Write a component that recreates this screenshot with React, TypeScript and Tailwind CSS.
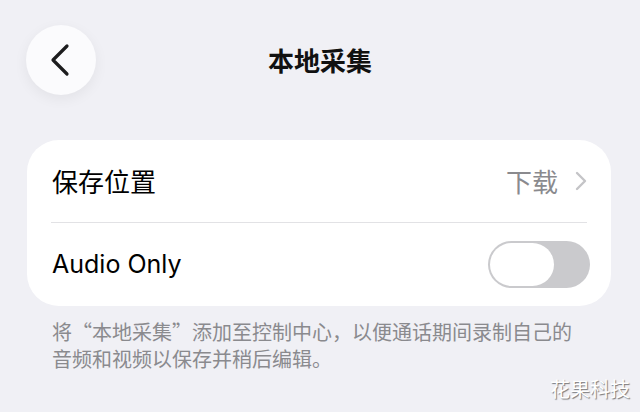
import React, { useState } from 'react';

const cjk = '[font-family:"Noto_Sans_CJK_SC","Noto_Sans",sans-serif]';

function BackButton() {
  return (
    <button className="w-[70px] h-[70px] rounded-full bg-[#fbfbfd] shadow-[0_4px_14px_rgba(0,0,0,0.06)] flex items-center justify-center">
      <svg width="24" height="34" viewBox="0 0 24 34" fill="none">
        <path d="M18 3 L4 17 L18 31" stroke="#1c1c1e" strokeWidth="3.2" strokeLinecap="round" strokeLinejoin="round" />
      </svg>
    </button>
  );
}

function Toggle({ on, onChange }: { on: boolean; onChange: () => void }) {
  return (
    <button
      onClick={onChange}
      className={`w-[102px] h-[47px] rounded-full p-[2px] flex ${on ? 'bg-[#34c759] justify-end' : 'bg-[#cacacd] justify-start'}`}
    >
      <span className="block w-[64px] h-full rounded-full bg-white" />
    </button>
  );
}

function App() {
  const [audioOnly, setAudioOnly] = useState(false);

  return (
    <div className={`relative w-[640px] h-[412px] overflow-hidden bg-[#f0f0f5] ${cjk}`}>
      <div className="flex items-center pt-[25px] pl-[26px] h-[95px]">
        <BackButton />
        <h1 className="flex-1 text-center text-[26px] font-bold text-[#111] pr-[96px] leading-none">本地采集</h1>
      </div>

      <div className="ml-[27px] w-[584px] mt-[45px] bg-white rounded-[32px]">
        <div className="h-[82px] flex items-center justify-between pl-[25px] pr-[24px]">
          <span className="text-[26px] text-black leading-none">保存位置</span>
          <div className="flex items-center gap-[17px]">
            <span className="text-[26px] text-[#8a8a8e] leading-none">下载</span>
            <svg width="12" height="20" viewBox="0 0 12 20" fill="none">
              <path d="M2 2 L10 10 L2 18" stroke="#c4c4c7" strokeWidth="2.4" strokeLinecap="round" strokeLinejoin="round" />
            </svg>
          </div>
        </div>
        <div className="mx-[24px] h-px bg-[#e2e2e5]" />
        <div className="h-[83px] flex items-center justify-between pl-[25px] pr-[21px]">
          <span className='text-[25px] text-black leading-none [font-family:Inter,"Noto_Sans",sans-serif]'>Audio Only</span>
          <Toggle on={audioOnly} onChange={() => setAudioOnly(!audioOnly)} />
        </div>
      </div>

      <p className="ml-[52px] w-[530px] mt-[12px] text-[20px] leading-[27px] text-[#8a8a8e]">
        将“本地采集”添加至控制中心，以便通话期间录制自己的音频和视频以保存并稍后编辑。
      </p>

      <span className="absolute right-[10px] bottom-[13px] text-[20px] text-white leading-none [text-shadow:1px_1px_1px_rgba(0,0,0,0.5)]">
        花果科技
      </span>
    </div>
  );
}

export default App;
